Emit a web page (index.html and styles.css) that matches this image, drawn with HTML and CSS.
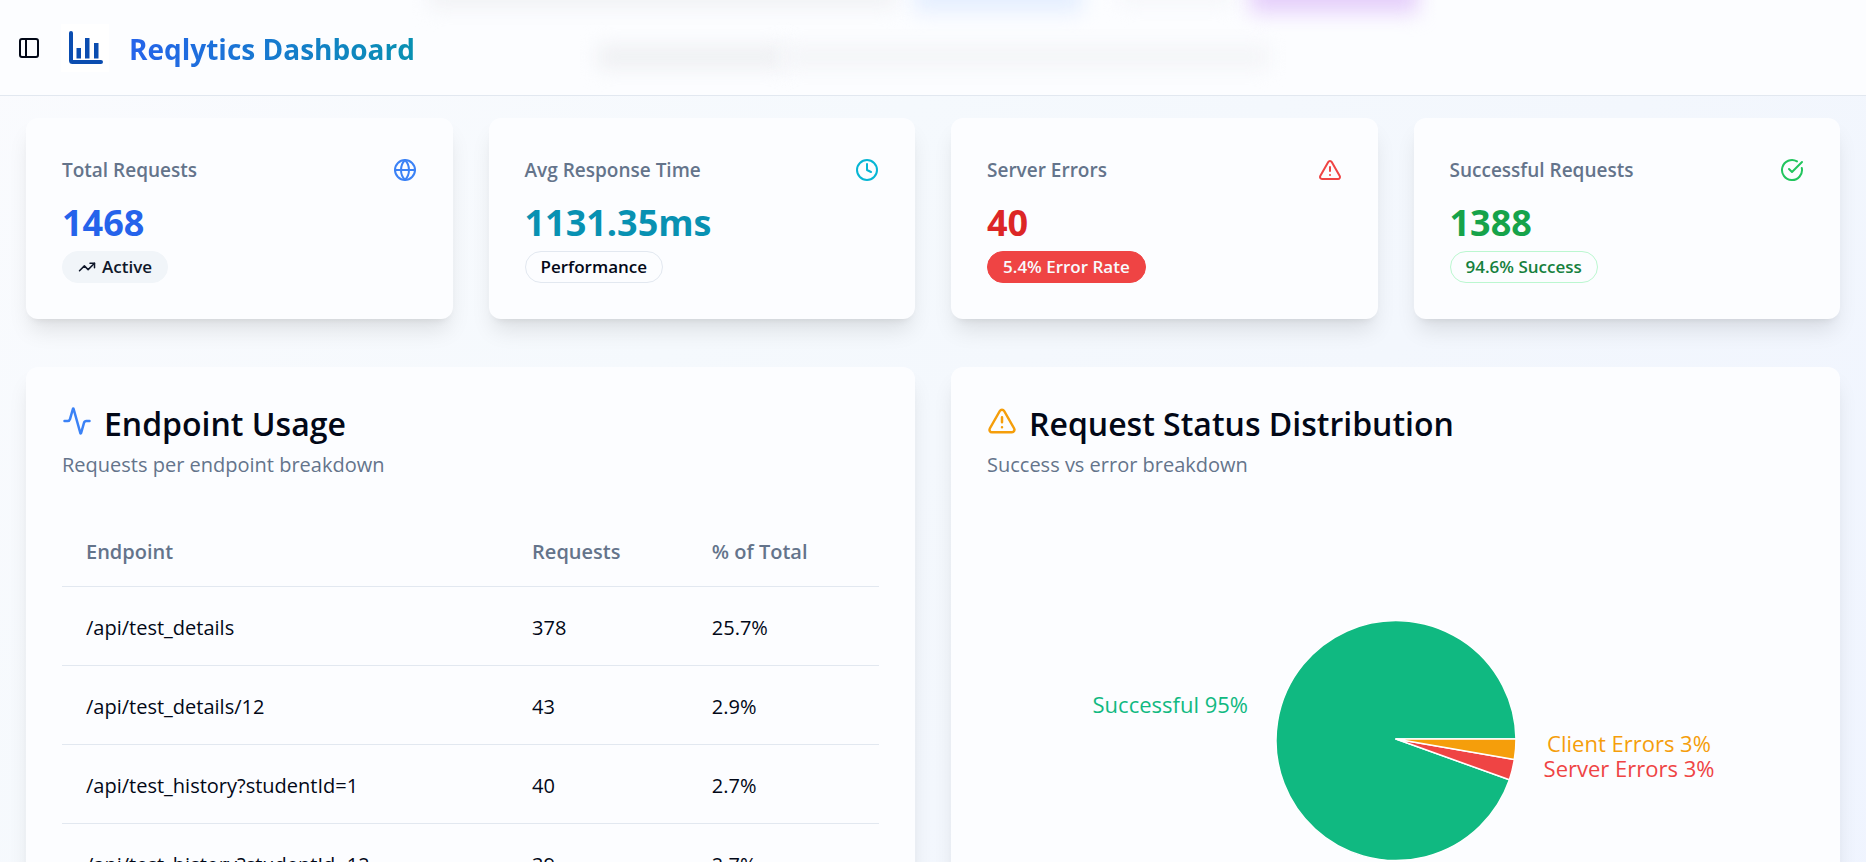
FILE: index.html
```html
<!DOCTYPE html>
<html lang="en">
<head>
<meta charset="utf-8">
<meta name="viewport" content="width=device-width, initial-scale=1">
<title>Reqlytics Dashboard</title>
<link rel="stylesheet" href="styles.css">
</head>
<body>
<header class="topbar">
  <div class="haze" aria-hidden="true">
    <span class="haze-blob haze-title"></span>
    <span class="haze-blob haze-blue"></span>
    <span class="haze-blob haze-grey"></span>
    <span class="haze-blob haze-purple"></span>
    <span class="haze-blob haze-strong"></span>
    <span class="haze-blob haze-line"></span>
  </div>
  <button class="toggle" type="button" aria-label="Toggle sidebar">
    <svg class="icon" viewBox="0 0 24 24"><rect x="3" y="3" width="18" height="18" rx="2"/><path d="M9 3v18"/></svg>
  </button>
  <svg class="logo" viewBox="0 0 48 48" role="img" aria-label="Reqlytics logo">
    <rect width="48" height="48" fill="#fff"/>
    <path d="M10 9v27.500q0 1.500 1.500 1.500H40" fill="none" stroke="#0b4db0" stroke-width="4" stroke-linecap="round"/>
    <path d="M15.500 24h4.500v10.500h-4.500zM24 14h4.500v20.500H24zM33 19h4.500v15.500H33z" fill="#0b4db0"/>
  </svg>
  <h1 class="brand">Reqlytics Dashboard</h1>
</header>

<main class="page">
  <section class="stats" aria-label="Summary">
    <article class="card">
      <div class="stat-head">
        <h2 class="stat-title">Total Requests</h2>
        <svg class="icon c-blue" viewBox="0 0 24 24"><circle cx="12" cy="12" r="10"/><path d="M12 2a14.500 14.500 0 0 0 0 20 14.500 14.500 0 0 0 0-20M2 12h20"/></svg>
      </div>
      <p class="stat-value v-blue">1468</p>
      <span class="badge b-soft"><svg class="icon icon-sm" viewBox="0 0 24 24"><path d="M22 7l-8.500 8.500-5-5L2 17"/><path d="M16 7h6v6"/></svg>Active</span>
    </article>
    <article class="card">
      <div class="stat-head">
        <h2 class="stat-title">Avg Response Time</h2>
        <svg class="icon c-cyan" viewBox="0 0 24 24"><circle cx="12" cy="12" r="10"/><path d="M12 6v6l4 2"/></svg>
      </div>
      <p class="stat-value v-cyan">1131.35ms</p>
      <span class="badge">Performance</span>
    </article>
    <article class="card">
      <div class="stat-head">
        <h2 class="stat-title">Server Errors</h2>
        <svg class="icon c-red" viewBox="0 0 24 24"><path d="m21.730 18-8-14a2 2 0 0 0-3.480 0l-8 14A2 2 0 0 0 4 21h16a2 2 0 0 0 1.730-3"/><path d="M12 9v4M12 17h.01"/></svg>
      </div>
      <p class="stat-value v-red">40</p>
      <span class="badge b-red">5.4% Error Rate</span>
    </article>
    <article class="card">
      <div class="stat-head">
        <h2 class="stat-title">Successful Requests</h2>
        <svg class="icon c-green" viewBox="0 0 24 24"><path d="M21.801 10A10 10 0 1 1 17 3.335"/><path d="m9 11 3 3L22 4"/></svg>
      </div>
      <p class="stat-value v-green">1388</p>
      <span class="badge b-green">94.6% Success</span>
    </article>
  </section>

  <div class="panels">
    <section class="card">
      <div class="panel-head">
        <svg class="icon icon-lg c-blue" viewBox="0 0 24 24"><path d="M22 12h-2.480a2 2 0 0 0-1.930 1.460l-2.350 8.360a.25.25 0 0 1-.48 0L9.240 2.180a.25.25 0 0 0-.48 0l-2.350 8.360A2 2 0 0 1 4.490 12H2"/></svg>
        <h2 class="panel-title">Endpoint Usage</h2>
      </div>
      <p class="panel-sub">Requests per endpoint breakdown</p>
      <table class="usage">
        <colgroup><col class="col-path"><col class="col-count"><col></colgroup>
        <thead><tr><th scope="col">Endpoint</th><th scope="col">Requests</th><th scope="col">% of Total</th></tr></thead>
        <tbody>
          <tr><td>/api/test_details</td><td>378</td><td>25.7%</td></tr>
          <tr><td>/api/test_details/12</td><td>43</td><td>2.9%</td></tr>
          <tr><td>/api/test_history?studentId=1</td><td>40</td><td>2.7%</td></tr>
          <tr><td>/api/test_history?studentId=12</td><td>39</td><td>2.7%</td></tr>
        </tbody>
      </table>
    </section>

    <section class="card">
      <div class="panel-head">
        <svg class="icon icon-lg c-amber" viewBox="0 0 24 24"><path d="m21.730 18-8-14a2 2 0 0 0-3.480 0l-8 14A2 2 0 0 0 4 21h16a2 2 0 0 0 1.730-3"/><path d="M12 9v4M12 17h.01"/></svg>
        <h2 class="panel-title">Request Status Distribution</h2>
      </div>
      <p class="panel-sub">Success vs error breakdown</p>
      <svg class="pie" viewBox="0 0 817 450" role="img" aria-label="Successful 95%, client errors 3%, server errors 3%">
        <g stroke="#fff" stroke-width="1.500" stroke-linejoin="round">
          <path d="M409 225H529A120 120 0 1 0 522.400 265.800Z" fill="#10b981"/>
          <path d="M409 225L522.400 265.800A120 120 0 0 0 527.300 245.500Z" fill="#ef4444"/>
          <path d="M409 225L527.300 245.500A120 120 0 0 0 529 225Z" fill="#f59e0b"/>
        </g>
        <text class="pie-label" x="261" y="199" text-anchor="end" fill="#10b981">Successful 95%</text>
        <text class="pie-label" x="642" y="238" text-anchor="middle" fill="#f59e0b">Client Errors 3%</text>
        <text class="pie-label" x="642" y="263" text-anchor="middle" fill="#ef4444">Server Errors 3%</text>
      </svg>
    </section>
  </div>
</main>
</body>
</html>
```
FILE: styles.css
```css
* { box-sizing: border-box; }

body {
  margin: 0;
  min-height: 100vh;
  font-family: "Open Sans", "Noto Sans", sans-serif;
  font-size: 20px;
  color: #020817;
  background: linear-gradient(135deg, #fafbfe 0%, #f5f9fd 35%, #f3f7fd 60%, #eff4ff 100%);
}

h1, h2, p { margin: 0; }

.icon {
  width: 24px;
  height: 24px;
  flex: none;
  fill: none;
  stroke: currentColor;
  stroke-width: 2;
  stroke-linecap: round;
  stroke-linejoin: round;
}
.icon-sm { width: 18px; height: 18px; }
.icon-lg { width: 30px; height: 30px; }

.c-blue { color: #3b82f6; }
.c-cyan { color: #06b6d4; }
.c-red { color: #ef4444; }
.c-green { color: #22c55e; }
.c-amber { color: #f59e0b; }

/* Top bar */
.topbar {
  position: sticky;
  top: 0;
  z-index: 10;
  display: flex;
  align-items: center;
  gap: 20px;
  height: 96px;
  padding: 0 17px;
  overflow: hidden;
  background: #fcfdff;
  border-bottom: 1px solid #e2e8f0;
}
.toggle {
  display: flex;
  padding: 0;
  border: 0;
  background: none;
  color: #020817;
  position: relative;
}
.logo { position: relative; width: 48px; height: 48px; flex: none; }
.brand {
  position: relative;
  padding-top: 2px;
  font-size: 28px;
  line-height: 40px;
  font-weight: 700;
  color: transparent;
  background: linear-gradient(90deg, #2563eb, #0891b2);
  background-clip: text;
  -webkit-background-clip: text;
}

/* Soft colour showing through the bar */
.haze { position: absolute; inset: 0; }
.haze-blob { position: absolute; filter: blur(10px); }
.haze-title { left: 23%; width: 25%; top: -20px; height: 28px; background: #f1f2f5; }
.haze-blue { left: 49%; width: 9%; top: -20px; height: 32px; background: #e4eeff; }
.haze-grey { left: 60%; width: 6%; top: -20px; height: 24px; background: #f5f6f9; }
.haze-purple { left: 67%; width: 9%; top: -30px; height: 43px; background: #e5cffb; }
.haze-strong { left: 32%; width: 10%; top: 46px; height: 22px; background: #eeeff2; }
.haze-line { left: 42%; width: 26%; top: 46px; height: 22px; background: #f3f4f7; }

/* Content */
.page { padding: 22px 26px 36px; }
.stats {
  display: grid;
  grid-template-columns: repeat(4, 1fr);
  gap: 36px;
}
.panels {
  display: grid;
  grid-template-columns: repeat(2, 1fr);
  gap: 36px;
  margin-top: 48px;
}
.card {
  padding: 36px;
  border-radius: 12px;
  background: #fcfdff;
  box-shadow: 0 15px 22px -4px rgba(0, 0, 0, .1), 0 6px 9px -6px rgba(0, 0, 0, .1);
}

.stat-head {
  display: flex;
  align-items: center;
  justify-content: space-between;
  height: 32px;
}
.stat-title { font-size: 19px; line-height: 32px; font-weight: 600; color: #64748b; }
.stat-value { margin-top: 13px; font-size: 36px; line-height: 48px; font-weight: 700; }
.v-blue { color: #2563eb; }
.v-cyan { color: #0891b2; }
.v-red { color: #dc2626; }
.v-green { color: #16a34a; }

.badge {
  display: flex;
  align-items: center;
  gap: 6px;
  width: fit-content;
  margin-top: 4px;
  padding: 3px 15px;
  border: 1px solid #e2e8f0;
  border-radius: 16px;
  font-size: 17px;
  line-height: 24px;
  font-weight: 600;
}
.b-soft { border-color: #f1f5f9; background: #f1f5f9; color: #0f172a; }
.b-red { border-color: #ef4444; background: #ef4444; color: #f8fafc; }
.b-green { border-color: #bbf7d0; color: #15803d; }

.panel-head { display: flex; align-items: flex-start; gap: 12px; }
.panel-head .icon { margin-top: 3px; }
.panel-title { font-size: 32px; line-height: 42px; font-weight: 600; }
.panel-sub { margin-top: 5px; font-size: 20px; line-height: 30px; color: #64748b; }

.usage {
  width: 100%;
  margin-top: 34px;
  border-collapse: collapse;
  table-layout: fixed;
  text-align: left;
}
.col-path { width: 54.6%; }
.col-count { width: 22%; }
.usage th {
  height: 72px;
  padding: 4px 24px 0;
  font-weight: 600;
  color: #64748b;
  border-bottom: 1px solid #e2e8f0;
}
.usage td {
  height: 79px;
  padding: 4px 24px 0;
  border-bottom: 1px solid #e2e8f0;
}

.pie { display: block; width: 100%; height: 450px; margin-top: 34px; }
.pie-label { font-size: 22px; }
```
